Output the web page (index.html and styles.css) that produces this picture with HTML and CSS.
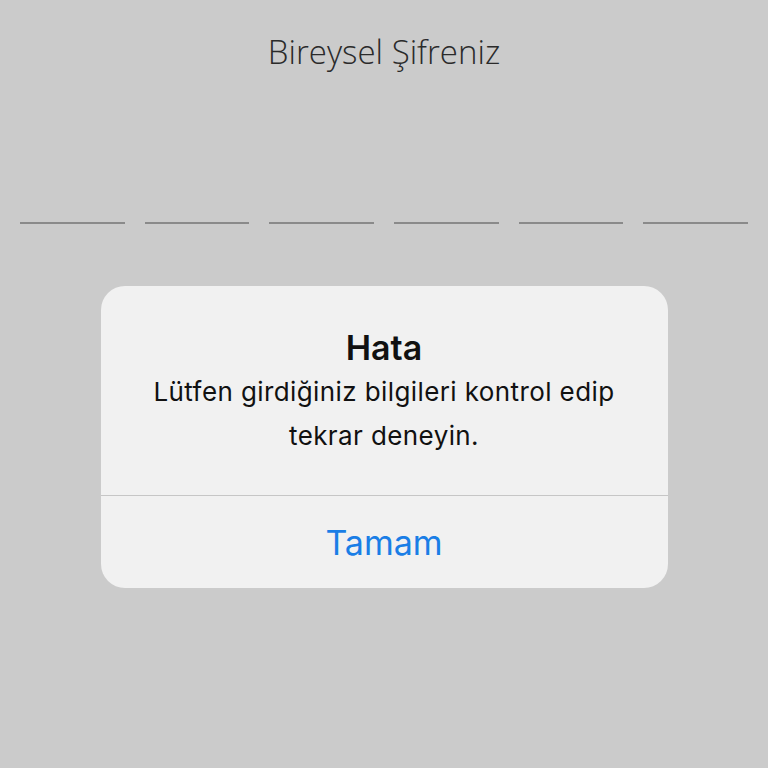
FILE: index.html
```html
<!DOCTYPE html>
<html lang="tr">
<head>
<meta charset="utf-8">
<link rel="stylesheet" href="styles.css">
</head>
<body>
<div class="screen">
  <h1 class="title">Bireysel Şifreniz</h1>
  <div class="pin">
    <span class="slot"></span><span class="slot"></span><span class="slot"></span>
    <span class="slot"></span><span class="slot"></span><span class="slot"></span>
  </div>
  <div class="alert">
    <div class="alert-body">
      <div class="alert-title">Hata</div>
      <div class="alert-msg">Lütfen girdiğiniz bilgileri kontrol edip tekrar deneyin.</div>
    </div>
    <div class="alert-btn">Tamam</div>
  </div>
</div>
</body>
</html>
```
FILE: styles.css
```css
html, body {
  margin: 0;
  padding: 0;
  background: #cbcbcb;
}
.screen {
  width: 768px;
  height: 768px;
  display: flex;
  flex-direction: column;
  align-items: center;
  font-family: Inter, "Noto Sans", sans-serif;
}
.title {
  margin: 32px 0 0;
  font-family: "Open Sans", sans-serif;
  font-weight: 300;
  font-size: 33px;
  line-height: 40px;
  color: #2a2a2a;
}
.pin {
  margin-top: 150px;
  width: 728px;
  display: flex;
  gap: 20px;
}
.slot {
  flex: 1;
  height: 2px;
  background: #8a8a8a;
}
.alert {
  margin-top: 62px;
  width: 567px;
  height: 302px;
  background: #f1f1f1;
  border-radius: 24px;
  display: flex;
  flex-direction: column;
}
.alert-body {
  height: 209px;
  border-bottom: 1px solid #c6c6c6;
  text-align: center;
  padding: 0 30px;
}
.alert-title {
  margin-top: 42px;
  font-size: 34px;
  font-weight: 600;
  line-height: 40px;
  color: #111;
}
.alert-msg {
  margin-top: 2px;
  font-size: 26px;
  letter-spacing: 0.4px;
  line-height: 44px;
  color: #111;
}
.alert-btn {
  flex: 1;
  display: flex;
  align-items: center;
  justify-content: center;
  font-size: 34px;
  color: #1a7ee6;
}
```
